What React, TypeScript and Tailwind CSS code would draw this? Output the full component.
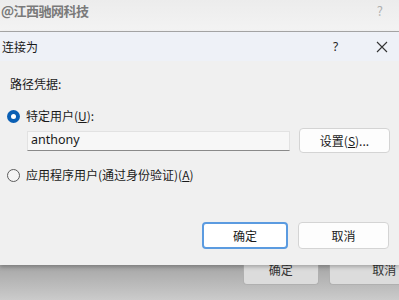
import React from "react";

const cjk = { fontFamily: '"Noto Sans CJK SC", "Noto Sans", sans-serif' };

export default function App() {
  return (
    <div className="w-[399px] h-[300px] overflow-hidden flex flex-col bg-[#f0f0f0]" style={cjk}>
      {/* background window top strip */}
      <div className="h-[32px] shrink-0 flex items-start justify-between bg-gradient-to-b from-[#ececec] to-[#f3f3f3] border-b border-[#a8a8a8]">
        <div className="pl-[1px] pt-[2px] text-[13px] leading-[18px] text-[#7a7a7a] font-bold tracking-[-0.5px]">@江西驰网科技</div>
        <div className="pr-[16px] pt-[2px] text-[13px] leading-[18px] text-[#b0b0b0]">?</div>
      </div>

      {/* dialog */}
      <div className="h-[233px] shrink-0 flex flex-col bg-[#f0f0f0] shadow-[0_2px_4px_rgba(0,0,0,0.25)] relative z-10">
        <div className="h-[29px] shrink-0 flex items-center bg-[#eef1f7]">
          <div className="pl-[2px] text-[12px] text-[#1a1a1a] flex-1">连接为</div>
          <div className="w-[10px] text-[12px] text-[#222] mr-[33px]" style={{ fontFamily: '"Noto Sans", sans-serif' }}>?</div>
          <svg width="12" height="12" viewBox="0 0 12 12" className="mr-[11px]">
            <path d="M1 1 L11 11 M11 1 L1 11" stroke="#333" strokeWidth="1.1" fill="none" />
          </svg>
        </div>

        <div className="flex flex-col px-[6px] text-[12px] text-[#1a1a1a]">
          <div className="pl-[4px] pt-[14px] h-[38px] leading-[18px]">路径凭据:</div>

          <div className="flex items-center h-[20px] mt-[7px]">
            <div className="w-[13px] h-[13px] rounded-full bg-[#0a5fb4] flex items-center justify-center ml-[1px]">
              <div className="w-[5px] h-[5px] rounded-full bg-white"></div>
            </div>
            <span className="ml-[6px]">特定用户(<span className="underline">U</span>):</span>
          </div>

          <div className="flex items-center mt-[2px] h-[25px]">
            <div className="ml-[21px] w-[263px] h-[20px] bg-[#f7f7f7] border border-[#e2e2e2] border-b-[#8a8a8a] flex items-center pl-[3px] text-[12.5px] text-[#1a1a1a]" style={{ fontFamily: '"Noto Sans", sans-serif' }}>
              anthony
            </div>
            <div className="ml-[9px] w-[91px] h-[25px] bg-[#fdfdfd] border border-[#d4d4d4] rounded-[4px] flex items-center justify-center text-[12px]">
              设置(<span className="underline">S</span>)...
            </div>
          </div>

          <div className="flex items-center h-[20px] mt-[12px]">
            <div className="w-[13px] h-[13px] rounded-full border border-[#5c5c5c] bg-[#f5f5f5] ml-[1px]"></div>
            <span className="ml-[6px]">应用程序用户(通过身份验证)(<span className="underline">A</span>)</span>
          </div>

          <div className="flex justify-end mt-[37px] gap-[10px] pr-[4px]">
            <div className="w-[86px] h-[27px] bg-white border-2 border-[#5b9be0] rounded-[4px] flex items-center justify-center text-[12px]">确定</div>
            <div className="w-[91px] h-[27px] bg-[#fdfdfd] border border-[#d4d4d4] rounded-[4px] flex items-center justify-center text-[12px]">取消</div>
          </div>
        </div>
      </div>

      {/* underlying window bottom */}
      <div className="flex-1 bg-gradient-to-b from-[#a6a6a6] to-[#cbcbcb] flex items-start">
        <div className="ml-[243px] w-[86px] h-[20px] bg-[#dcdcdc] border border-t-0 border-[#b0b0b0] rounded-b-[4px] flex items-center justify-center text-[12px] text-[#333] pb-[4px]">
          <span className="-mt-[6px]">确定</span>
        </div>
        <div className="ml-[10px] w-[80px] h-[20px] bg-[#dcdcdc] border border-t-0 border-r-0 border-[#b0b0b0] rounded-bl-[4px] flex items-center justify-center text-[12px] text-[#333]">
          <span className="-mt-[10px] ml-[40px]">取消</span>
        </div>
      </div>
    </div>
  );
}
